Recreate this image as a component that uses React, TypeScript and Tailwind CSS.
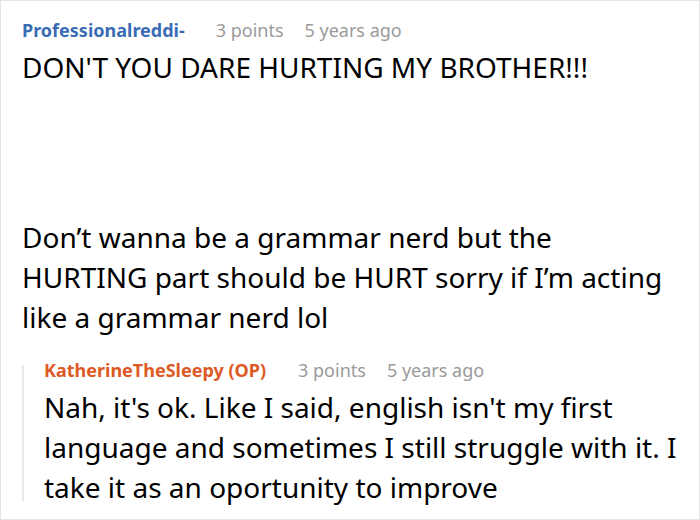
export default function App() {
  return (
    <div className="h-[520px] w-[700px] overflow-hidden border border-[#e4e4e4] bg-white font-['Noto_Sans',sans-serif] text-black">
      <div className="px-[21px] pt-[13px]">
        <div className="flex items-baseline text-[18px] leading-[32px]">
          <span className="font-bold text-[#3a6cb6]">Professionalreddi-</span>
          <span className="ml-[31px] text-[#9a9a9a]">3 points</span>
          <span className="ml-[21px] text-[#9a9a9a]">5 years ago</span>
        </div>
        <p className="mt-[1px] text-[28px] leading-[40px]">DON'T YOU DARE HURTING MY BROTHER!!!</p>
        <p className="mt-[130px] text-[28px] leading-[40px]">
          Don’t wanna be a grammar nerd but the HURTING part should be HURT sorry if I’m acting like a grammar nerd lol
        </p>
      </div>
      <div className="relative mt-[17px] ml-[21px] pl-[22px] before:absolute before:top-[11px] before:bottom-[6px] before:left-0 before:w-[2px] before:bg-[#e8e8e8] before:content-['']">
        <div className="flex items-baseline text-[18px] leading-[32px]">
          <span className="font-bold text-[#dd5a26]">KatherineTheSleepy (OP)</span>
          <span className="ml-[32px] text-[#9a9a9a]">3 points</span>
          <span className="ml-[21px] text-[#9a9a9a]">5 years ago</span>
        </div>
        <p className="mt-[1px] text-[28px] leading-[40px]">
          Nah, it's ok. Like I said, english isn't my first language and sometimes I still struggle with it. I take it as an oportunity to improve
        </p>
      </div>
    </div>
  );
}
